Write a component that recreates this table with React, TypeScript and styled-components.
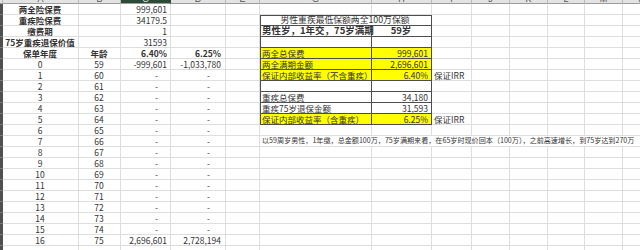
import React from "react";
import styled, { createGlobalStyle, css } from "styled-components";

// column widths: row header, A, B, C, D, E, G, H, I, J, K, L, M, N
const COLS = "3px 76px 42px 50px 55px 34px 112px 60px 40px 38px 38px 37px 38px 38px";
const LETTERS = ["", "A", "B", "C", "D", "E", "G", "H", "I", "J", "K", "L", "M", "N"];

const GlobalStyle = createGlobalStyle`
  html, body {
    margin: 0;
    padding: 0;
    background: #ffffff;
  }
  body {
    font-family: "Noto Sans CJK SC", "Noto Sans", sans-serif;
    color: #333333;
  }
`;

const Sheet = styled.div`
  width: 640px;
  height: 250px;
  overflow: hidden;
  background: #ffffff;
`;

const HeaderRow = styled.div`
  display: grid;
  grid-template-columns: ${COLS};
  height: 4px;
  overflow: hidden;
`;

const ColHead = styled.div<{ $active?: boolean }>`
  position: relative;
  overflow: hidden;
  background: ${({ $active }) => ($active ? "#2d4a37" : "#e3e3e3")};
  border-right: 1px solid ${({ $active }) => ($active ? "#2d4a37" : "#b9b9b9")};
  border-bottom: 1px solid #9c9c9c;
  color: ${({ $active }) => ($active ? "#dfe8e1" : "#555555")};
  font-family: "Liberation Sans", sans-serif;
  font-size: 9px;
  line-height: 1;
  text-align: center;
  box-sizing: border-box;
  & > span {
    position: absolute;
    left: 0;
    right: 0;
    bottom: -1px;
  }
`;

const Row = styled.div`
  display: grid;
  grid-template-columns: ${COLS};
  height: 11px;
`;

const RowHead = styled.div`
  background: #505050;
  border-bottom: 1px solid #7a7a7a;
  box-sizing: border-box;
`;

type CellProps = {
  $align?: "left" | "center" | "right";
  $bold?: boolean;
  $fill?: string;
  $box?: boolean;
  $boxTop?: boolean;
  $boxLeft?: boolean;
  $size?: number;
  $span?: number;
  $padR?: number;
};

const Cell = styled.div<CellProps>`
  display: flex;
  align-items: center;
  justify-content: ${({ $align }) =>
    $align === "left" ? "flex-start" : $align === "right" ? "flex-end" : "center"};
  box-sizing: border-box;
  height: 11px;
  overflow: visible;
  padding: 0 ${({ $padR }) => $padR ?? 3}px 0 2px;
  white-space: nowrap;
  font-size: ${({ $size }) => $size ?? 8.5}px;
  font-weight: ${({ $bold }) => ($bold ? 700 : 400)};
  line-height: 1;
  background: ${({ $fill }) => $fill ?? "transparent"};
  border-right: 1px solid #dedede;
  border-bottom: 1px solid #dedede;
  ${({ $span }) => $span && css`grid-column: span ${$span};`}
  ${({ $box }) =>
    $box &&
    css`
      border-right-color: #4d4d4d;
      border-bottom-color: #4d4d4d;
    `}
  ${({ $boxTop, $boxLeft }) =>
    ($boxTop || $boxLeft) &&
    css`
      box-shadow: inset ${$boxLeft ? "1px" : "0"} ${$boxTop ? "1px" : "0"} 0 #4d4d4d;
    `}
`;

type Left = { a?: string; b?: string; c?: string; d?: string; bold?: boolean; bBold?: boolean; dash?: boolean };

const leftRows: Left[] = [
  { a: "两全险保费", c: "999,601", bold: true },
  { a: "重疾险保费", c: "34179.5", bold: true },
  { a: "缴费期", c: "1", bold: true },
  { a: "75岁重疾退保价值", c: "31593", bold: true },
  { a: "保单年度", b: "年龄", c: "6.40%", d: "6.25%", bold: true, bBold: true },
  ...Array.from({ length: 17 }, (_, i): Left => ({
    a: String(i),
    b: String(59 + i),
    c: i === 0 ? "-999,601" : i === 16 ? "2,696,601" : "-",
    d: i === 0 ? "-1,033,780" : i === 16 ? "2,728,194" : "-",
    dash: i > 0 && i < 16,
  })),
  {},
];

const YELLOW = "#ffff00";

const SENTENCE =
  "以59周岁男性，1年缴，总金额100万，75岁满期来看，在65岁时现价回本（100万），之前高速增长，到75岁达到270万";

const rightPart = (r: number) => {
  const empty = (n: number) =>
    Array.from({ length: n }, (_, i) => <Cell key={`e${r}-${i}`} />);
  const boxRow = (
    label: string,
    value: string,
    fill?: string,
    note?: string
  ) => [
    <Cell key="g" $box $boxLeft $align="left" $fill={fill}>
      {label}
    </Cell>,
    <Cell key="h" $box $align="right" $fill={fill}>
      {value}
    </Cell>,
    <Cell key="i" $align="left">
      {note}
    </Cell>,
    ...empty(5),
  ];

  switch (r) {
    case 1:
      return [
        <Cell key="t" $span={2} $box $boxTop $boxLeft $size={8.8}>
          男性重疾最低保额两全100万保额
        </Cell>,
        ...empty(6),
      ];
    case 2:
      return [
        <Cell key="g" $box $boxLeft $align="left" $bold $size={9.5}>
          男性岁，1年交，75岁满期
        </Cell>,
        <Cell key="h" $box $bold $size={9.5}>
          59岁
        </Cell>,
        ...empty(6),
      ];
    case 3:
    case 7:
      return boxRow("", "");
    case 4:
      return boxRow("两全总保费", "999,601", YELLOW);
    case 5:
      return boxRow("两全满期金额", "2,696,601", YELLOW);
    case 6:
      return boxRow("保证内部收益率（不含重疾）", "6.40%", YELLOW, "保证IRR");
    case 8:
      return boxRow("重疾总保费", "34,180");
    case 9:
      return boxRow("重疾75岁退保金额", "31,593");
    case 10:
      return boxRow("保证内部收益率（含重疾）", "6.25%", YELLOW, "保证IRR");
    case 12:
      return [
        <Cell key="s" $span={8} $align="left" $size={7.1}>
          {SENTENCE}
        </Cell>,
      ];
    default:
      return empty(8);
  }
};

const App = () => {
  return (
    <Sheet>
      <GlobalStyle />
      <HeaderRow>
        {LETTERS.map((l, i) => (
          <ColHead key={i} $active={l === "C"}>
            <span>{l}</span>
          </ColHead>
        ))}
      </HeaderRow>
      {leftRows.map((row, r) => (
        <Row key={r}>
          <RowHead />
          <Cell $bold={row.bold}>{row.a}</Cell>
          <Cell $bold={row.bBold}>{row.b}</Cell>
          <Cell $align="right" $bold={row.bold && !!row.d} $padR={row.dash ? 12 : 3}>
            {row.c}
          </Cell>
          <Cell $align="right" $bold={row.bold && !!row.d} $padR={row.dash ? 15 : 4}>
            {row.d}
          </Cell>
          <Cell />
          {rightPart(r)}
        </Row>
      ))}
    </Sheet>
  );
};

export default App;
